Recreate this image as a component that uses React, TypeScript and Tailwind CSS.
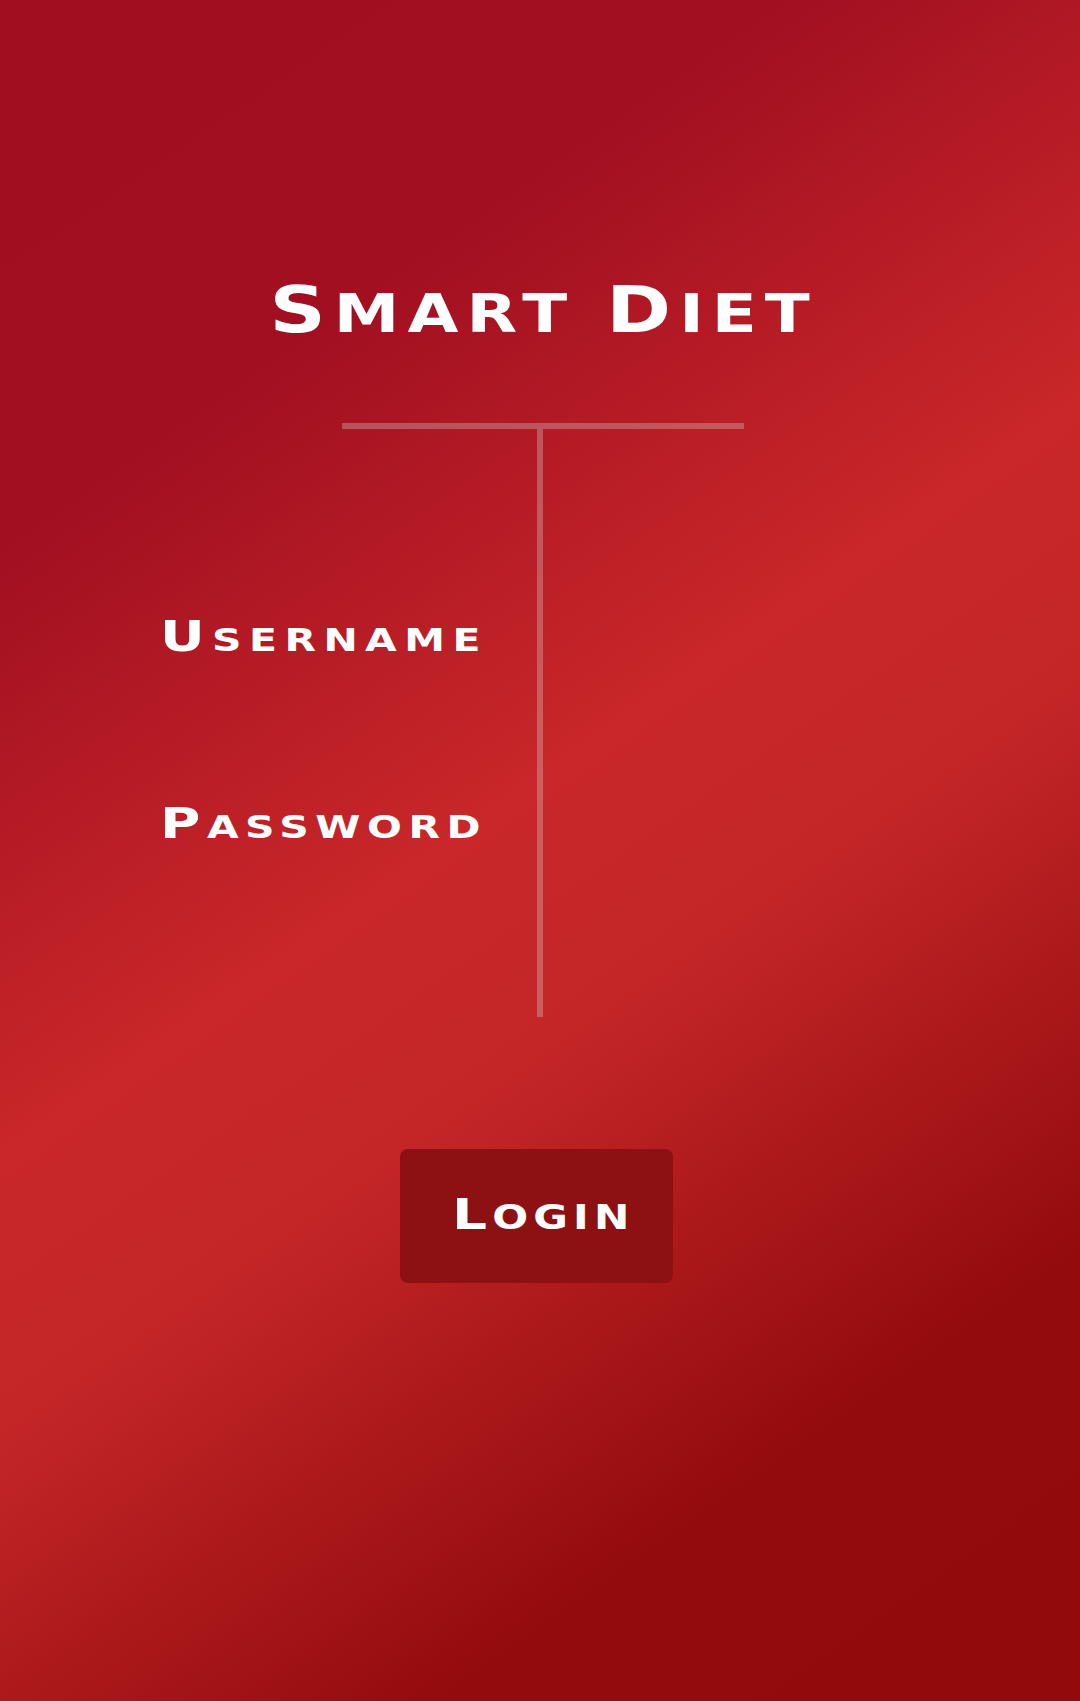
import React from "react";

function Caps({
  text,
  big,
  small,
}: {
  text: string;
  big: string;
  small: string;
}) {
  const words = text.split(" ");
  return (
    <>
      {words.map((w, i) => (
        <React.Fragment key={i}>
          {i > 0 && <span className={small}> </span>}
          <span className={big}>{w[0].toUpperCase()}</span>
          <span className={small}>{w.slice(1).toUpperCase()}</span>
        </React.Fragment>
      ))}
    </>
  );
}

export default function App() {
  return (
    <div className="w-full min-h-[1701px] bg-[linear-gradient(145deg,#a00e20_0%,#a10f21_22%,#c92729_47%,#c42628_58%,#930b0d_82%,#920b0c_100%)] font-['DejaVu_Sans',sans-serif] font-bold text-white flex flex-col">
      <h1 className="mt-[278px] h-[64px] leading-[64px] text-center whitespace-nowrap pl-[8px]">
        <span className="inline-block scale-x-[1.22] origin-center tracking-[6.6px]">
          <Caps text="Smart Diet" big="text-[64px]" small="text-[54px]" />
        </span>
      </h1>

      <div className="mt-[81px] ml-[342px] w-[402px] h-[6px] bg-[rgba(210,210,210,0.33)]" />

      <div className="flex">
        <div className="w-[537px] pl-[160px] flex flex-col">
          <label className="mt-[186px] h-[43px] leading-[43px] whitespace-nowrap">
            <span className="inline-block scale-x-[1.28] origin-left tracking-[5.8px]">
              <Caps text="Username" big="text-[43px]" small="text-[32px]" />
            </span>
          </label>
          <label className="mt-[144px] h-[43px] leading-[43px] whitespace-nowrap">
            <span className="inline-block scale-x-[1.28] origin-left tracking-[5.1px]">
              <Caps text="Password" big="text-[43px]" small="text-[32px]" />
            </span>
          </label>
        </div>
        <div className="w-[6px] h-[588px] bg-[rgba(210,210,210,0.33)]" />
      </div>

      <button className="mt-[132px] ml-[400px] w-[273px] h-[134px] rounded-[8px] bg-[#8d1012] flex items-center justify-center leading-[43px] whitespace-nowrap pl-[13px] pt-[6px]">
        <span className="inline-block scale-x-[1.28] origin-center tracking-[4px]">
          <Caps text="Login" big="text-[43px]" small="text-[33px]" />
        </span>
      </button>
    </div>
  );
}
